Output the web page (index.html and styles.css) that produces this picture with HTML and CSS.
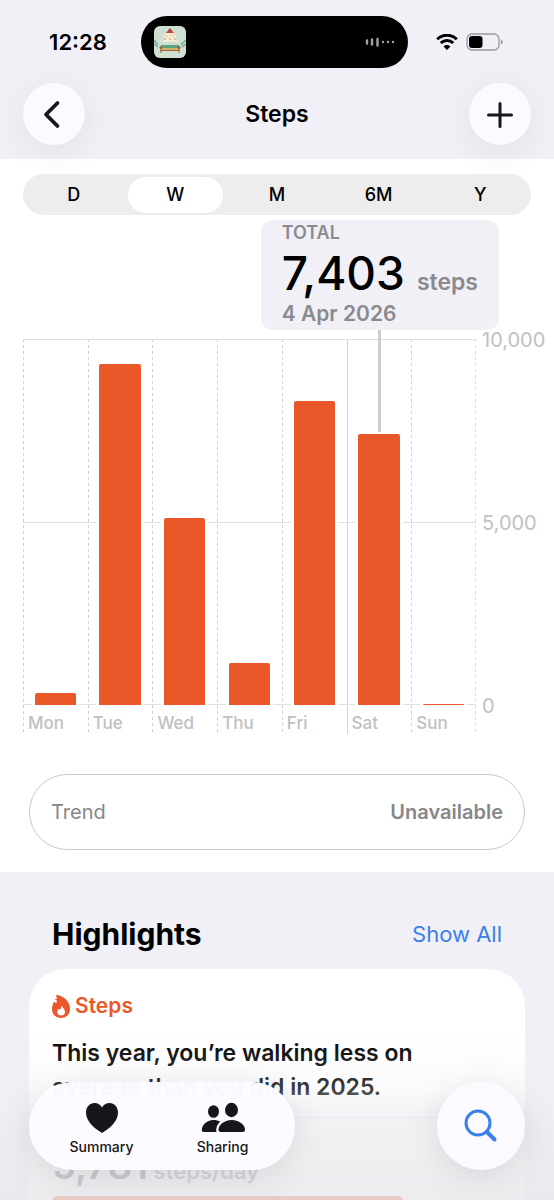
FILE: index.html
```
<!DOCTYPE html>
<html lang="en">

<head>
    <meta charset="UTF-8">
    <meta name="viewport" content="width=device-width, initial-scale=1.0">
    <title>Steps</title>
    <link rel="stylesheet" href="styles.css">
</head>

<body>
<div class="app">
    <header class="top">
        <div class="status-bar">
            <span class="clock">12:28</span>
            <div class="island">
                <svg class="island-art" viewBox="0 0 32 32">
                    <rect width="32" height="32" rx="6" fill="#cfe0d3"/>
                    <path d="M16 2l4 5h-8z" fill="#b5483c"/>
                    <path d="M12 7h8l3 4-2 1 4 4H8l3-4-2-1z" fill="#f4ecd2"/>
                    <path d="M12 10h1M16 9h1M19 10h1M10 13h2M15 13h2M20 13h2" stroke="#d39a8a"/>
                    <path d="M0 14l4 5M0 18l4 3M32 14l-5 5M32 18l-4 3" stroke="#6fa993" stroke-width="1.5"/>
                    <rect x="7" y="19" width="18" height="3" fill="#5aa57c"/>
                    <rect x="7" y="22" width="18" height="2" fill="#c9b565"/>
                    <path d="M6 24.5h20M7 20v7M25 20v7" stroke="#a0603d" stroke-width="1"/>
                    <circle cx="7" cy="21.500" r="1.500" fill="#a0603d"/>
                    <circle cx="25" cy="21.500" r="1.500" fill="#a0603d"/>
                </svg>
                <svg class="island-wave" viewBox="0 0 30 10">
                    <path d="M2 3.500v3M7 2.500v5M12.500 2v6.500M18 5v.1M23 5v.1M28 5v.1" stroke="#a3a39b" stroke-width="2.400" stroke-linecap="round"/>
                </svg>
            </div>
            <div class="signals">
                <svg class="wifi" viewBox="0 0 22 16">
                    <path d="M1.200 5.300a13.800 13.800 0 0 1 19.600 0M4.800 9a8.800 8.800 0 0 1 12.400 0" fill="none" stroke="#000" stroke-width="3"/>
                    <path d="M11 16l-3.400-3.500a4.800 4.800 0 0 1 6.800 0z"/>
                </svg>
                <svg class="battery" viewBox="0 0 37 18">
                    <rect x="1" y="1" width="32" height="16" rx="5" fill="none" stroke="#98989d" stroke-width="1.300"/>
                    <rect x="3" y="3" width="13.500" height="12" rx="3"/>
                    <path d="M34.800 6.500q2 .6 2 2.500t-2 2.500z" fill="#98989d"/>
                </svg>
            </div>
        </div>
        <nav class="nav-bar">
            <button class="round-button" aria-label="Back">
                <svg viewBox="0 0 32 32"><path d="M19.500 5L8 16.500 19.500 28"/></svg>
            </button>
            <h1>Steps</h1>
            <button class="round-button thin" aria-label="Add">
                <svg viewBox="0 0 32 32"><path d="M16 5.500v23M4.500 17h23"/></svg>
            </button>
        </nav>
    </header>

    <main class="content">
        <fieldset class="segments">
            <label><input type="radio" name="range"><span>D</span></label>
            <label><input type="radio" name="range" checked><span>W</span></label>
            <label><input type="radio" name="range"><span>M</span></label>
            <label><input type="radio" name="range"><span>6M</span></label>
            <label><input type="radio" name="range"><span>Y</span></label>
        </fieldset>

        <section class="chart">
            <div class="days">
                <div class="day">
                    <div class="plot"><div class="bar" style="height: 3.4%"></div></div>
                    <span>Mon</span>
                </div>
                <div class="day">
                    <div class="plot"><div class="bar" style="height: 93.1%"></div></div>
                    <span>Tue</span>
                </div>
                <div class="day">
                    <div class="plot"><div class="bar" style="height: 51%"></div></div>
                    <span>Wed</span>
                </div>
                <div class="day">
                    <div class="plot"><div class="bar" style="height: 11.6%"></div></div>
                    <span>Thu</span>
                </div>
                <div class="day">
                    <div class="plot"><div class="bar" style="height: 83.1%"></div></div>
                    <span>Fri</span>
                </div>
                <div class="day week-start">
                    <div class="plot"><div class="bar selected" style="height: 74%"></div></div>
                    <span>Sat</span>
                </div>
                <div class="day">
                    <div class="plot"><div class="bar" style="height: 0.2%"></div></div>
                    <span>Sun</span>
                </div>
            </div>
            <div class="scale">
                <span>10,000</span>
                <span>5,000</span>
                <span>0</span>
            </div>
            <div class="tooltip">
                <p>TOTAL</p>
                <p class="total"><strong>7,403</strong> steps</p>
                <p class="date">4 Apr 2026</p>
            </div>
        </section>

        <button class="trend"><span>Trend</span><b>Unavailable</b></button>
    </main>

    <section class="highlights">
        <div class="highlights-head">
            <h2>Highlights</h2>
            <a href="#">Show All</a>
        </div>
        <article class="card">
            <h3>
                <svg viewBox="0 0 18 23">
                    <path d="M4 0c7 .3 14 6 14 14 0 5.500-3.800 9-9 9s-9-3.500-9-9c0-3 1-5.500 2-7.500l2 2c.6-1 1-2 .8-3L2.500 4.500 5 3.800z" fill="#ea5829"/>
                    <path d="M9.500 10c.5 2 3.500 4 3.500 7 0 2.300-1.600 3.600-3.800 3.600S5.300 19 5.300 17c0-1.300.6-2.400 1.200-3.200l1.300 1.200c1.200-1.200 1.900-3 1.700-5z" fill="#fff"/>
                </svg>
                Steps
            </h3>
            <p class="summary">This year, you’re walking less on average than you did in 2025.</p>
            <p class="average"><strong>5,781</strong> steps/day</p>
            <div class="average-bar"></div>
        </article>
    </section>

    <div class="fade"></div>
    <nav class="tab-bar">
        <div class="tabs">
            <button>
                <svg viewBox="0 0 46 32"><path d="M23 31C15 26 7 19.500 7 10.500 7 5 10.800 1 15.500 1c3.300 0 6 1.700 7.500 4.500C24.500 2.700 27.200 1 30.500 1 35.200 1 39 5 39 10.500c0 9-8 15.500-16 20.500z"/></svg>
                Summary
            </button>
            <button>
                <svg viewBox="0 0 46 32">
                    <ellipse cx="13.500" cy="9.500" rx="5.500" ry="6.300"/>
                    <ellipse cx="31.500" cy="8" rx="6.500" ry="7.200"/>
                    <path d="M16.500 30H4c-1.500 0-2.200-.8-2.200-2C1.800 23.500 6.500 18 13.500 18c2.600 0 4.800.6 6.600 1.700-2.600 2.300-4.600 6.300-3.600 10.300z"/>
                    <path d="M21 30c-1.600 0-2.500-.8-2.500-2.200C18.500 23.300 23.700 18 31.700 18s13.300 5.300 13.300 9.800c0 1.400-.9 2.200-2.500 2.200z"/>
                </svg>
                Sharing
            </button>
        </div>
        <button class="search" aria-label="Search">
            <svg viewBox="0 0 34 34"><circle cx="14" cy="14" r="12"/><path d="M23 23l7.500 7.500" stroke-width="4"/></svg>
        </button>
    </nav>
</div>
</body>

</html>
```
FILE: styles.css
```
* {
    padding: 0;
    margin: 0;
    box-sizing: border-box;
}

body {
    font-family: Inter, "Liberation Sans", sans-serif;
    color: #000;
    background-color: #f1f0f6;
}

button {
    border: none;
    font: inherit;
    color: inherit;
    cursor: pointer;
}

.app {
    position: relative;
    display: flex;
    flex-direction: column;
    height: 100vh;
    overflow: hidden;
}

/* header */

.top {
    position: relative;
    padding-bottom: 14px;
    background-color: #f1f0f6;
}

.status-bar {
    display: grid;
    grid-template-columns: 1fr 267px 1fr;
    align-items: center;
    height: 83px;
    padding-right: 5px;
}

.clock {
    padding-left: 15px;
    text-align: center;
    font-size: 22px;
    font-weight: 600;
}

.island {
    display: flex;
    align-items: center;
    justify-content: space-between;
    height: 52px;
    padding: 0 13px;
    border-radius: 26px;
    background-color: #000;
}

.island-art {
    width: 32px;
    height: 32px;
}

.island-wave {
    width: 30px;
    height: 10px;
}

.signals {
    display: flex;
    align-items: center;
    gap: 8px;
    padding-left: 28px;
}

.wifi {
    width: 22px;
    height: 16px;
}

.battery {
    width: 37px;
    height: 18px;
}

.nav-bar {
    display: flex;
    align-items: center;
    justify-content: space-between;
    padding: 0 23px;
}

.nav-bar h1 {
    font-size: 23px;
    font-weight: 600;
}

.round-button {
    position: relative;
    z-index: 1;
    width: 62px;
    height: 62px;
    padding: 15px;
    border-radius: 50%;
    background-color: #fbfaff;
    box-shadow: 0 6px 36px rgba(0, 0, 0, .07);
}

.round-button svg {
    display: block;
    width: 32px;
    fill: none;
    stroke: #17171b;
    stroke-width: 3.8;
    stroke-linecap: round;
    stroke-linejoin: round;
}

.thin svg {
    stroke-width: 3;
}

/* chart */

.content {
    padding: 15px 23px 22px;
    background-color: #fff;
}

.segments {
    display: grid;
    grid-template-columns: repeat(5, 1fr);
    height: 41px;
    padding: 3px 0;
    border: none;
    border-radius: 21px;
    background-color: #ededee;
}

.segments label {
    padding: 0 3px;
    cursor: pointer;
}

.segments input {
    position: absolute;
    opacity: 0;
}

.segments span {
    display: block;
    border-radius: 18px;
    text-align: center;
    font-size: 18px;
    font-weight: 500;
    line-height: 36px;
}

.segments input:checked + span {
    background-color: #fff;
}

.chart {
    position: relative;
    display: flex;
    margin-top: 124px;
    margin-right: -13px;
    color: #c0c0c4;
}

.days {
    display: grid;
    grid-template-columns: repeat(7, 1fr);
    flex: 1;
    background-image: repeating-linear-gradient(#dddde0 0 3px, transparent 3px 6px);
    background-size: 1px 100%;
    background-position: right;
    background-repeat: no-repeat;
}

.day {
    background-image: repeating-linear-gradient(#cfcfd4 0 3px, transparent 3px 6px);
    background-size: 1px 100%;
    background-repeat: no-repeat;
}

.week-start {
    background-image: linear-gradient(#d4d4d8, #d4d4d8);
}

.day span {
    display: block;
    padding: 7px 0 0 5px;
    font-size: 17px;
    font-weight: 500;
    line-height: 22px;
}

/* lines at 10,000, 5,000 and 0 */
.plot {
    display: flex;
    align-items: flex-end;
    justify-content: center;
    height: 366px;
    background-image: linear-gradient(#e0e0e4, #e0e0e4), linear-gradient(#e0e0e4, #e0e0e4), linear-gradient(#e0e0e4, #e0e0e4);
    background-size: 100% 1px;
    background-position: top, center, bottom;
    background-repeat: no-repeat;
}

.bar {
    position: relative;
    width: 64%;
    border-radius: 2px 2px 0 0;
    background-color: #ea5829;
    box-shadow: 3px 0 #fff, -3px 0 #fff;
}

.selected::before {
    content: "";
    position: absolute;
    left: calc(50% - 1px);
    bottom: calc(100% + 2px);
    width: 3px;
    height: 104px;
    background-color: #cdcdd0;
}

.scale {
    display: flex;
    flex-direction: column;
    justify-content: space-between;
    width: 68px;
    height: 388px;
    margin-top: -10px;
    padding-left: 6px;
    font-size: 20px;
    line-height: 22px;
}

.tooltip {
    position: absolute;
    top: -119px;
    right: 45px;
    padding: 0 21px 4px;
    border-radius: 12px;
    font-size: 18px;
    font-weight: 600;
    line-height: 25px;
    color: #8a8a8f;
    background-color: #f1f0f6;
}

.total {
    display: flex;
    align-items: baseline;
    gap: 12px;
    font-size: 23px;
}

.total strong {
    font-size: 46px;
    font-weight: 500;
    line-height: 56px;
    color: #000;
}

.date {
    font-size: 21px;
}

.trend {
    display: flex;
    align-items: center;
    justify-content: space-between;
    width: calc(100% - 12px);
    height: 76px;
    margin: 40px 6px 0;
    padding: 0 21px;
    border: 1px solid #c9c9ce;
    border-radius: 38px;
    font-size: 20px;
    color: #87878a;
    background-color: #fff;
}

.trend b {
    font-weight: 600;
}

/* highlights */

.highlights {
    padding: 40px 29px 0;
}

.highlights-head {
    display: flex;
    align-items: center;
    justify-content: space-between;
    padding: 0 23px;
    line-height: 44px;
}

.highlights-head h2 {
    font-size: 30px;
    font-weight: 700;
}

.highlights-head a {
    font-size: 22px;
    color: #3a80ea;
    text-decoration: none;
}

.card {
    height: 300px;
    margin-top: 13px;
    padding: 22px 23px;
    border-radius: 37px;
    background-color: #fff;
}

.card h3 {
    display: flex;
    align-items: center;
    gap: 5px;
    font-size: 21px;
    font-weight: 600;
    line-height: 30px;
    color: #ea5829;
}

.card h3 svg {
    width: 18px;
    height: 23px;
}

.summary {
    margin-top: 15px;
    max-width: 400px;
    font-size: 23px;
    font-weight: 600;
    line-height: 34px;
}

.average {
    margin-top: 13px;
    padding-top: 22px;
    border-top: 1px solid #dcdce0;
    font-size: 22px;
    font-weight: 600;
    line-height: 50px;
    color: #8a8a8f;
}

.average strong {
    font-size: 38px;
    font-weight: 600;
    color: #55555a;
}

.average-bar {
    width: 78%;
    height: 40px;
    border-radius: 5px;
    background-color: #ea5829;
}

/* bottom bar */

.fade {
    position: absolute;
    right: 0;
    bottom: 0;
    left: 0;
    height: 170px;
    background-image: linear-gradient(rgba(238, 238, 242, 0), rgba(238, 238, 242, .25) 35%, rgba(238, 238, 242, .75) 52%, rgba(232, 232, 236, .8));
}

.tab-bar {
    position: absolute;
    right: 29px;
    bottom: 30px;
    left: 29px;
    display: flex;
    justify-content: space-between;
}

.tabs {
    display: flex;
    height: 88px;
    padding: 0 12px;
    border-radius: 44px;
    background-color: rgba(252, 251, 255, .98);
    box-shadow: 0 6px 36px rgba(0, 0, 0, .1);
}

.tabs button {
    display: flex;
    flex-direction: column;
    align-items: center;
    width: 121px;
    padding-top: 20px;
    font-size: 14px;
    font-weight: 500;
    line-height: 26px;
    color: #17171b;
    background-color: transparent;
}

.tabs svg {
    width: 46px;
    height: 32px;
    fill: #17171b;
}

.search {
    width: 88px;
    height: 88px;
    padding: 27px;
    border-radius: 50%;
    background-color: #fbfaff;
    box-shadow: 0 6px 36px rgba(0, 0, 0, .1);
}

.search svg {
    display: block;
    width: 34px;
    fill: none;
    stroke: #3a80ea;
    stroke-width: 3;
    stroke-linecap: round;
}
```
